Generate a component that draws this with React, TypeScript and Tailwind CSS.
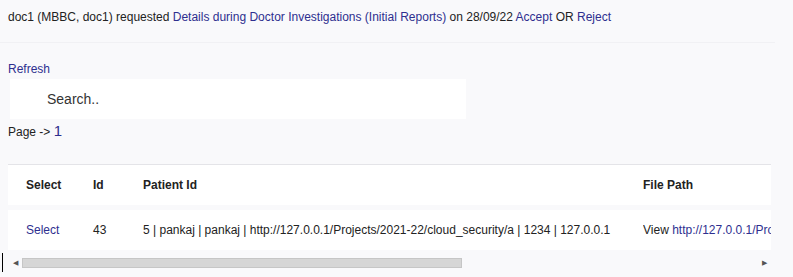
const link = 'text-[#2e2f8f]';

export default function App() {
  return (
    <div className="h-[277px] w-[793px] overflow-hidden bg-[#f9f9fb] font-['Liberation_Sans',Arial,sans-serif] text-[12px] text-[#222]">
      <p className="pl-2 pt-[10px] leading-[15px]">
        doc1 (MBBC, doc1) requested <a className={link}>Details during Doctor Investigations (Initial Reports)</a> on
        28/09/22 <a className={link}>Accept</a> OR <a className={link}>Reject</a>
      </p>
      <div className="mt-[17px] h-px w-[775px] bg-[#f1f1f4]" />

      <a className={`mt-[19px] block pl-2 leading-[15px] ${link}`}>Refresh</a>
      <div className="ml-[10px] mt-[2px] flex h-[40px] w-[456px] items-center bg-white pl-[37px] text-[14px] text-[#333]">
        Search..
      </div>
      <p className="mt-[4px] flex items-baseline pl-2 leading-[16px]">
        Page -&gt;&nbsp;<span className={`text-[15px] ${link}`}>1</span>
      </p>

      <div className="ml-2 mt-[24px] w-[763px] overflow-hidden">
        <table className="w-[900px] table-fixed border-t border-[#e4e4e8] text-left">
          <colgroup>
            <col className="w-[85px]" />
            <col className="w-[50px]" />
            <col className="w-[500px]" />
            <col />
          </colgroup>
          <thead>
            <tr className="h-[40px] bg-white">
              <th className="pl-[18px] font-bold">Select</th>
              <th className="font-bold">Id</th>
              <th className="font-bold">Patient Id</th>
              <th className="font-bold">File Path</th>
            </tr>
          </thead>
          <tbody>
            <tr className="h-[5px]" />
            <tr className="h-[40px] bg-white">
              <td className="pl-[18px]">
                <a className={link}>Select</a>
              </td>
              <td>43</td>
              <td className="whitespace-nowrap">
                5 | pankaj | pankaj | http://127.0.0.1/Projects/2021-22/cloud_security/a | 1234 | 127.0.0.1
              </td>
              <td className="overflow-hidden whitespace-nowrap">
                View <a className={link}>http://127.0.0.1/Pro</a>
              </td>
            </tr>
          </tbody>
        </table>
      </div>

      <div className="mt-[6px] flex h-[14px] items-center">
        <div className="ml-[2px] h-[19px] w-px bg-black" />
        <div className="ml-[5px] flex h-[12px] w-[763px] items-center">
          <span className="w-[14px] text-center text-[7px] leading-none text-[#555]">◀</span>
          <div className="h-[10px] w-[440px] border border-[#c6c6c6] bg-[#d6d6d6]" />
          <div className="flex-1" />
          <span className="w-[14px] text-center text-[7px] leading-none text-[#555]">▶</span>
        </div>
      </div>
    </div>
  );
}
